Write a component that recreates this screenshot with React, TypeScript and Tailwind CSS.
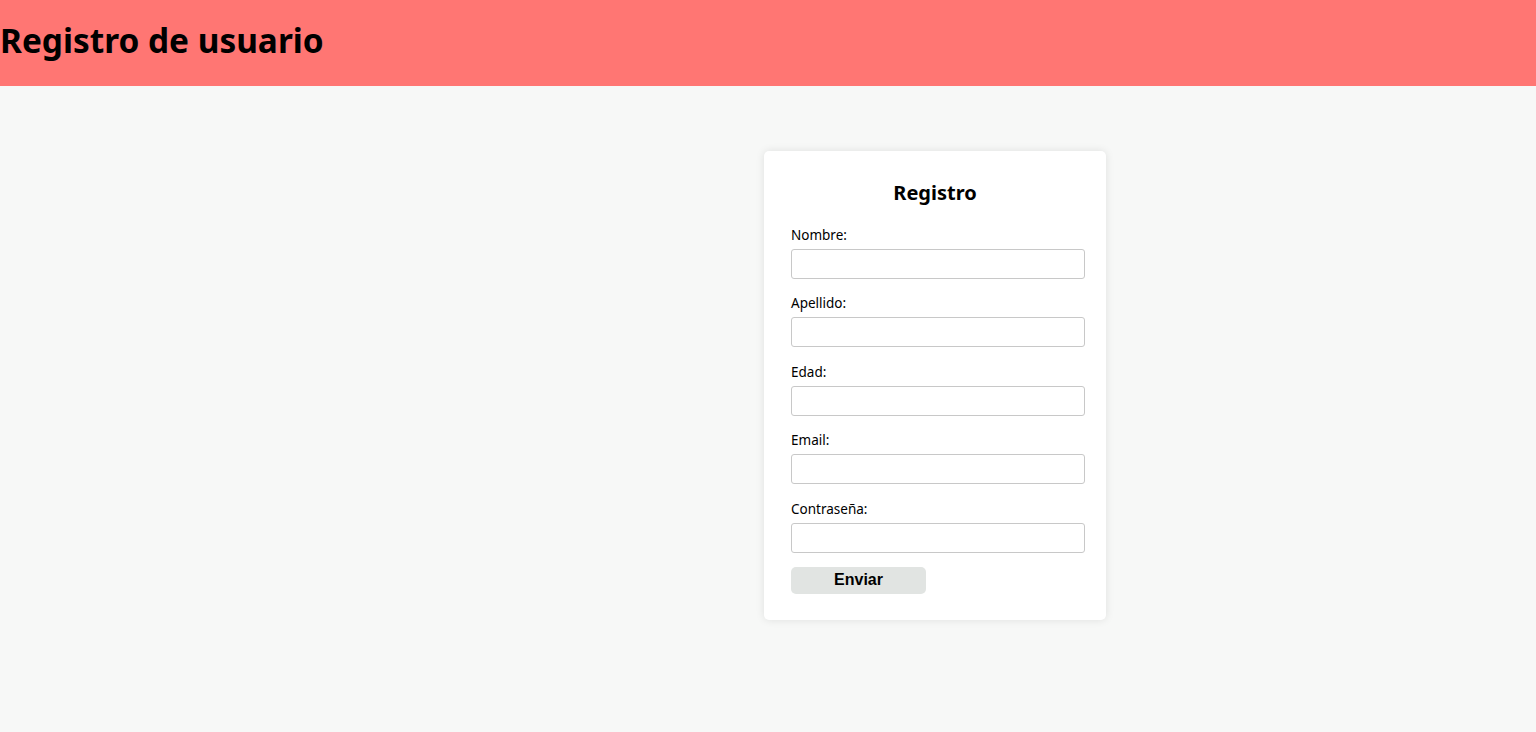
import React from "react";

const fields = ["Nombre:", "Apellido:", "Edad:", "Email:", "Contraseña:"];

export default function App() {
  return (
    <div className="min-h-[732px] bg-[#f7f8f7] font-['Noto_Sans',sans-serif] text-black">
      <header className="h-[86px] bg-[#ff7673] flex items-center">
        <h1 className="text-[33.4px] font-bold leading-none -mt-[4px]">Registro de usuario</h1>
      </header>
      <main className="pt-[65px] pl-[764px]">
        <div className="w-[342px] h-[469px] bg-white rounded-[5px] shadow-[0_0_8px_rgba(0,0,0,0.1)] pl-[27px] pr-[21px] pt-[27px]">
          <h2 className="text-center text-[20px] font-bold leading-[30px] pr-[6px]">Registro</h2>
          <form className="mt-[17px] flex flex-col">
            {fields.map((f) => (
              <div key={f} className="flex flex-col mb-[14.4px]">
                <label className="text-[13.5px] leading-[21px] mb-[3px]">{f}</label>
                <input className="h-[30px] w-[294px] border border-[#c8c8c8] rounded-[3px] bg-white" />
              </div>
            ))}
            <button type="button" className="w-[135px] h-[27px] rounded-[5px] bg-[#e1e4e2] font-['Liberation_Sans',sans-serif] font-bold text-[16px] leading-none">Enviar</button>
          </form>
        </div>
      </main>
    </div>
  );
}
